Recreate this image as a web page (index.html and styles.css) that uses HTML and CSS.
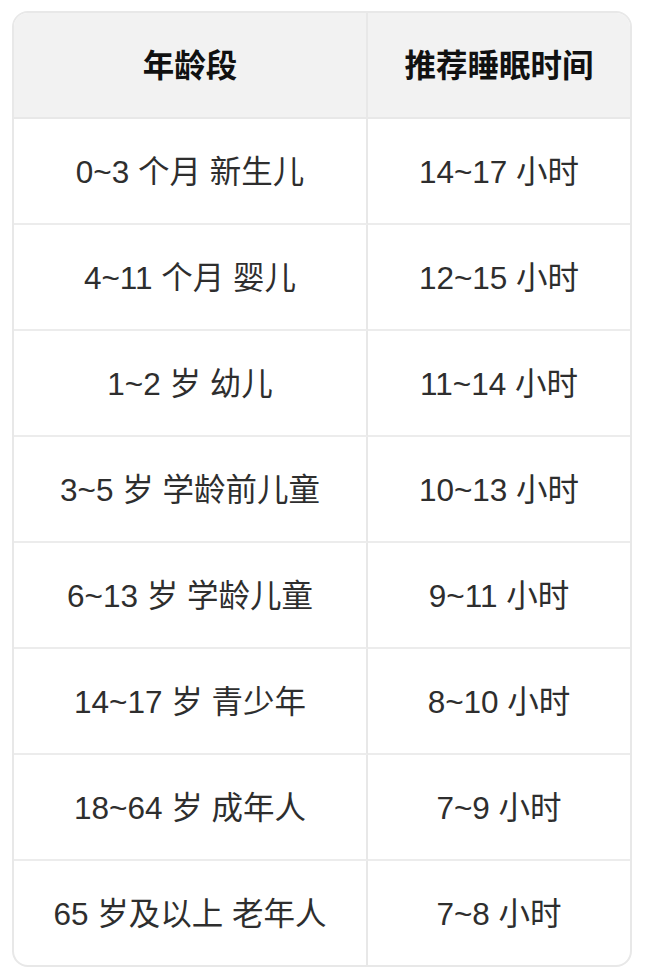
FILE: index.html
```html
<!DOCTYPE html>
<html lang="zh">
<head>
<meta charset="utf-8">
<link rel="stylesheet" href="styles.css">
</head>
<body>
<div class="wrap">
<table class="sleep">
<thead>
<tr><th class="c1">年龄段</th><th class="c2">推荐睡眠时间</th></tr>
</thead>
<tbody>
<tr><td class="c1">0~3 个月 新生儿</td><td class="c2">14~17 小时</td></tr>
<tr><td class="c1">4~11 个月 婴儿</td><td class="c2">12~15 小时</td></tr>
<tr><td class="c1">1~2 岁 幼儿</td><td class="c2">11~14 小时</td></tr>
<tr><td class="c1">3~5 岁 学龄前儿童</td><td class="c2">10~13 小时</td></tr>
<tr><td class="c1">6~13 岁 学龄儿童</td><td class="c2">9~11 小时</td></tr>
<tr><td class="c1">14~17 岁 青少年</td><td class="c2">8~10 小时</td></tr>
<tr><td class="c1">18~64 岁 成年人</td><td class="c2">7~9 小时</td></tr>
<tr><td class="c1">65 岁及以上 老年人</td><td class="c2">7~8 小时</td></tr>
</tbody>
</table>
</div>
</body>
</html>
```
FILE: styles.css
```css
html, body {
  margin: 0;
  padding: 0;
  background: #ffffff;
}
.wrap {
  padding: 11px 14px 12px 12px;
}
.sleep {
  width: 620px;
  border-collapse: separate;
  border-spacing: 0;
  border: 2px solid #e8e8e8;
  border-radius: 16px;
  overflow: hidden;
  font-family: "Liberation Sans", "Noto Sans CJK SC", sans-serif;
  font-size: 31.5px;
  line-height: 1.4;
  color: #2e2e2e;
  table-layout: fixed;
}
.sleep th, .sleep td {
  text-align: center;
  vertical-align: middle;
  padding: 3px 0 0;
}
.sleep .c1 { width: 352px; border-right: 2px solid #e8e8e8; }
.sleep th {
  height: 101px;
  background: #f2f2f2;
  font-weight: 700;
  color: #111111;
  border-bottom: 2px solid #e8e8e8;
}
.sleep td {
  height: 101px;
  border-bottom: 2px solid #ececec;
}
.sleep tbody tr:last-child td { border-bottom: none; }
```
